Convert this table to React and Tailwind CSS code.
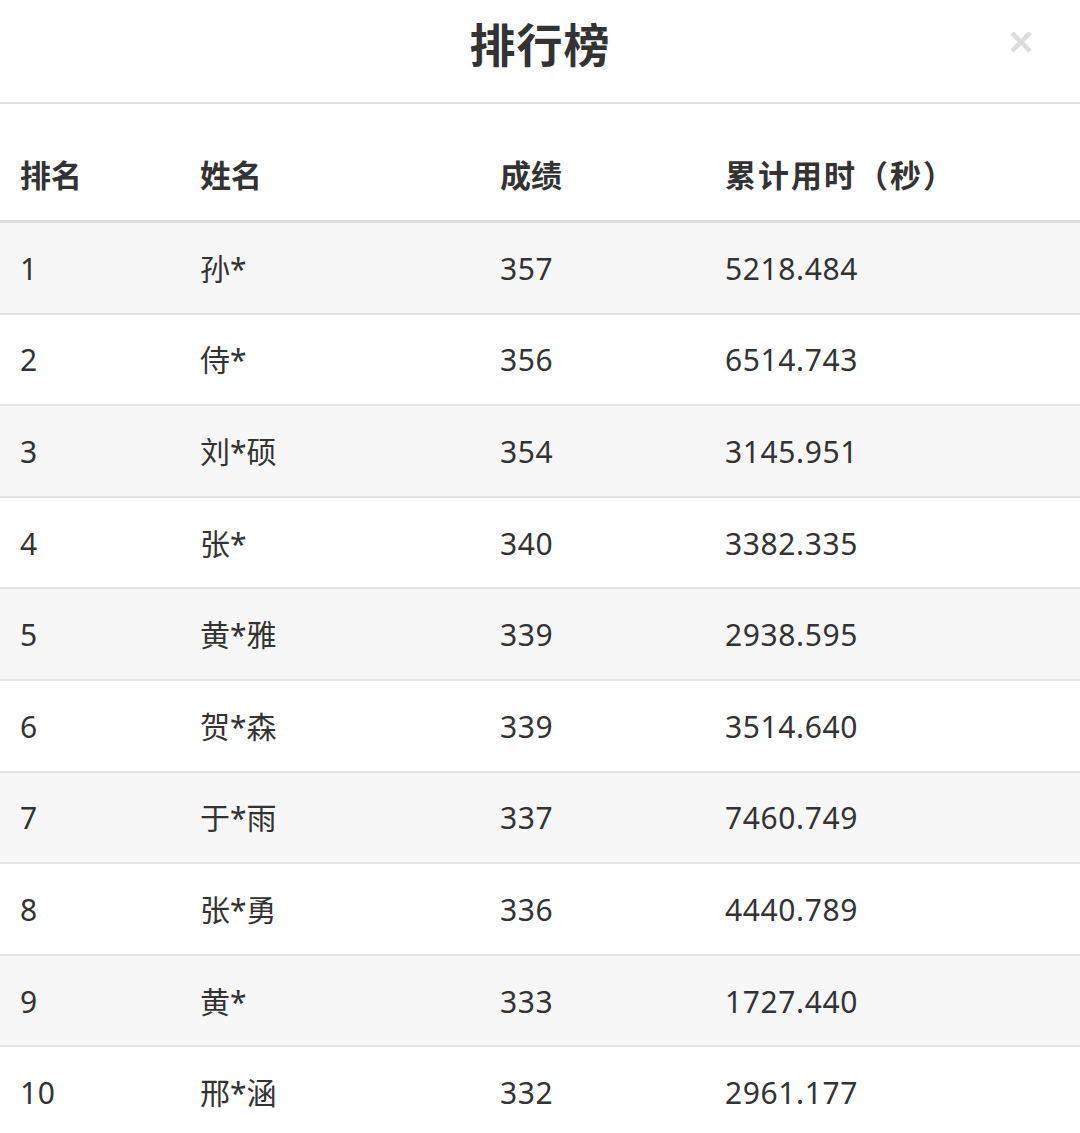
import React from 'react';

const rows = [
  ['1', '孙*', '357', '5218.484'],
  ['2', '侍*', '356', '6514.743'],
  ['3', '刘*硕', '354', '3145.951'],
  ['4', '张*', '340', '3382.335'],
  ['5', '黄*雅', '339', '2938.595'],
  ['6', '贺*森', '339', '3514.640'],
  ['7', '于*雨', '337', '7460.749'],
  ['8', '张*勇', '336', '4440.789'],
  ['9', '黄*', '333', '1727.440'],
  ['10', '邢*涵', '332', '2961.177'],
];

export default function App() {
  return (
    <div
      className="w-[1080px] h-[1133px] overflow-hidden bg-white text-[#333]"
      style={{ fontFamily: '"Noto Sans", "Noto Sans CJK SC", sans-serif' }}
    >
      {/* Title bar */}
      <div className="relative h-[104px] border-b-2 border-[#e2e2e2] flex items-center justify-center">
        <h1 className="text-[46px] font-bold leading-none -mt-[14px] tracking-[1px]">排行榜</h1>
        <span className="absolute right-[46px] top-[29px] text-[#dcdcdc]">
          <svg width="26" height="26" viewBox="0 0 26 26">
            <path d="M4 4 L22 22 M22 4 L4 22" stroke="currentColor" strokeWidth="4.5" strokeLinecap="butt" />
          </svg>
        </span>
      </div>

      {/* Header */}
      <div className="grid grid-cols-[180px_300px_225px_1fr] h-[119px] pl-[20px] pt-[56px] border-b-[3px] border-[#dedede] text-[31px] font-semibold leading-none">
        <div>排名</div>
        <div>姓名</div>
        <div>成绩</div>
        <div className="tracking-[2px]">累计用时（秒）</div>
      </div>

      {/* Rows */}
      {rows.map((r, i) => (
        <div
          key={r[0]}
          className={`grid grid-cols-[180px_300px_225px_1fr] items-center h-[91.6px] pl-[20px] pt-[2px] border-b-2 border-[#e4e4e4] text-[30px] leading-none ${
            i % 2 === 0 ? 'bg-[#f7f7f7]' : 'bg-white'
          }`}
        >
          <div className="tracking-[0.6px]">{r[0]}</div>
          <div>{r[1]}</div>
          <div className="tracking-[0.6px]">{r[2]}</div>
          <div className="tracking-[0.6px]">{r[3]}</div>
        </div>
      ))}
    </div>
  );
}
